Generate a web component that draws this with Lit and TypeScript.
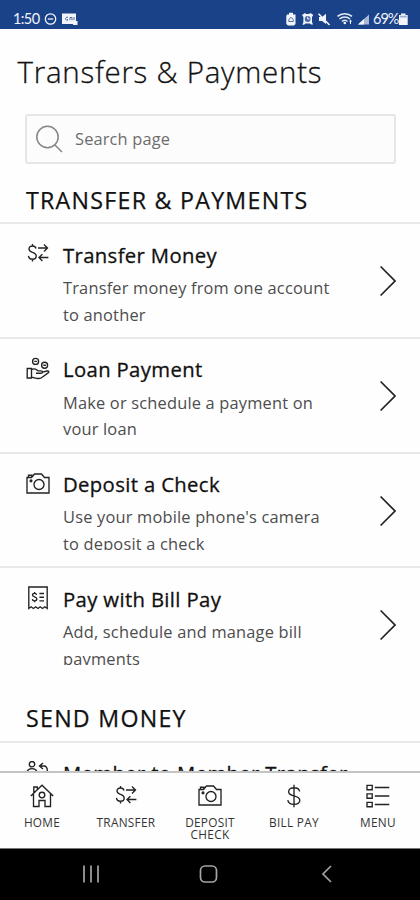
import { LitElement, html, css, svg, nothing } from "lit";
import { customElement, property } from "lit/decorators.js";

const shapes: Record<string, unknown> = {
  transfer: svg`<path d="M10 6.5C9.6 4.6 8.3 4 6.5 4C4.3 4 3 5.1 3 6.9C3 8.8 4.6 9.6 6.6 10.3C8.8 11 10.2 12 10.2 14C10.2 16 8.7 17.2 6.5 17.2C4.2 17.2 2.7 16 2.5 13.9M6.5 2V4M6.5 17.2V19.6M12 6H21.5M18 2.6L21.5 6L18 9.4M22.4 15.5H13M16.4 12.2L13 15.5L16.4 19"/>`,
  loan: svg`<circle cx="9.6" cy="4.4" r="3"/><circle cx="18.6" cy="8.2" r="3"/><path d="M8.3 4.4H10.9M17.3 8.2H19.9M1.2 11.5H5.5V21H1.2ZM5.5 12.8C8 10.8 10 12 12 13.8H15C17 13.8 17 16.2 15 16.2H10M16.5 15.2L21 14C23.2 13.7 23.4 15.4 21.8 16.2L15.5 20.7C12 22.9 9 20.7 5.5 20.2"/>`,
  camera: svg`<path d="M1 5.5H5.5L8.5 2H15.5L18.5 5.5H23V21H1Z"/><path d="M2.5 5.5V3.2H6V5"/><circle cx="13" cy="12.5" r="5"/><circle cx="5" cy="8.8" r=".9" fill="currentColor"/>`,
  receipt: svg`<path d="M2.8 1H21.2V22.5L18.8 20.8L16.5 22.5L14.2 20.8L12 22.5L9.7 20.8L7.4 22.5L5.1 20.8L2.8 22.5Z"/><path d="M10.6 8.8C10.4 7.8 9.6 7.4 8.6 7.4C7.3 7.4 6.5 8 6.5 9C6.5 11.3 10.9 10.5 10.9 13C10.9 14.1 9.9 14.8 8.6 14.8C7.3 14.8 6.4 14.2 6.3 13.1M8.6 6V7.4M8.6 14.8V16.3M13.4 7.5H18M13.4 11.2H18M13.4 14.9H18"/>`,
  member: svg`<circle cx="6" cy="3.2" r="2.7"/><path d="M.8 12.5C.8 6 11.2 6 11.2 12.5ZM13.5 5H18C20.5 5 21.5 6.5 21.5 11M17 2L13.5 5L17 8"/>`,
  home: svg`<path d="M.8 12L12 1.2L23.2 12M3.5 10V22.5H9V16.5H15V22.5H20.5V10M3.8 8.5V3H7.3V5"/><circle cx="12" cy="11" r="2.8"/>`,
  dollar: svg`<path d="M17.6 7.5C17.2 4.8 15 3.7 12 3.7C8.8 3.7 6.6 5.2 6.6 7.7C6.6 10.4 9 11.1 12 11.8C15.2 12.6 17.8 13.5 17.8 16.3C17.8 18.9 15.4 20.4 12 20.4C8.6 20.4 6.2 19.2 5.8 16.2M12 .8V23.3"/>`,
  menu: svg`<path d="M1 1.3H6.2V5.7H1ZM1 9.8H6.2V14.2H1ZM1 18.3H6.2V22.7H1ZM8.8 3.5H23.3M8.8 12H23.3M8.8 20.5H23.3"/>`,
};

@customElement("line-icon")
export class LineIcon extends LitElement {
  @property() name = "";
  static styles = css`
    :host { display: block; width: 24px; height: 24px; color: #222; }
    svg { display: block; width: 100%; height: 100%; fill: none; stroke: currentColor; stroke-width: 1.35; }
  `;
  render() {
    return html`<svg viewBox="0 0 24 24">${shapes[this.name] ?? nothing}</svg>`;
  }
}

@customElement("status-bar")
export class StatusBar extends LitElement {
  static styles = css`
    :host { display: flex; justify-content: space-between; box-sizing: border-box; height: 29px; padding: 9px 11px 0 13px; background: #1a4289; color: #f1f4fb; font: 14.5px/20px Lato, sans-serif; }
    .group { display: flex; align-items: center; height: 20px; }
    svg { display: block; height: 14px; }
    .clock { width: 31px; letter-spacing: -0.6px; }
    .percent { width: 25px; letter-spacing: -1px; }
  `;
  render() {
    return html`
      <div class="group">
        <span class="clock">1:50</span>
        <svg width="34" height="14" viewBox="0 0 34 14" fill="none" stroke="#f1f4fb">
          <circle cx="6.5" cy="7" r="5.2" stroke-width="1.3"/><path d="M3.8 7H9.2" stroke-width="1.3"/>
          <path d="M18 1.5H32V9H33.5V13H29V12H18Z" fill="#f1f4fb" stroke="none"/>
          <path d="M24 5.2C21 4.5 20.5 8.5 23.5 8.2V7M26 8.2V5.5H28V8.2M30 5V8.2" stroke="#526c9d" stroke-width="1"/>
        </svg>
      </div>
      <div class="group">
        <svg width="88" height="14" viewBox="0 0 88 14" fill="#f1f4fb">
          <path d="M2 2.5H4V.8H8V2.5H10.5V12L9 13.4H3L1.3 12V4Z"/>
          <path d="M3.8 9.5V7.4L6 5.4L8.3 7.4V9.5Z" fill="none" stroke="#54709f" stroke-width="1"/>
          <path d="M17 3L20 1L21 2H24L25.5 1L28.3 3L27 5V10L28 12.5H26L25 11.5H20.5L19 12.8H17.5L18.4 10V5Z"/>
          <circle cx="22.7" cy="7" r="2.9" fill="#4a69a3"/><path d="M22.7 4.8V7H24.5" fill="none" stroke="#f1f4fb" stroke-width="1"/>
          <path d="M34 5H37L41 1.8V12L37 9H34Z"/><path d="M33.5 1.8L44.5 13" stroke="#f1f4fb" stroke-width="1.6"/>
          <path d="M52.5 4.4C56.5 .8 63 .8 67 4.4M54.5 7C57.5 4.2 62 4.2 65 7M57 9.5C59 7.8 60.8 7.8 62.5 9.5" fill="none" stroke="#e5eaf5" stroke-width="1.5"/>
          <circle cx="59.8" cy="11" r="1.3"/><path d="M65.5 7.5L67 9.5H66V12H65V9.5H64Z"/>
          <path d="M73 12.5L84 2.5V12.5Z" fill="#a8b8d5"/><path d="M73 12.5L79 7V12.5Z"/>
        </svg>
        <span class="percent">69%</span>
        <svg width="11" height="14" viewBox="0 0 11 14" fill="#f1f4fb"><path d="M3 1.5H7.5V3H9.7V13H1V3H3Z"/><path d="M2 3.7H8.8V5.5H2Z" fill="#9bacd0"/></svg>
      </div>`;
  }
}

@customElement("action-row")
export class ActionRow extends LitElement {
  @property() icon = "";
  @property() heading = "";
  @property({ attribute: false }) lines: string[] = [];
  static styles = css`
    :host { display: grid; grid-template-columns: 37px 1fr 16px; box-sizing: border-box; height: 114.7px; padding: 0 24px 0 26px; border-top: 2px solid #e8e8e8; }
    line-icon { margin-top: 18px; }
    .title { margin: 16.2px 0 0; font-size: 20.3px; line-height: 28px; font-weight: 400; -webkit-text-stroke: 0.3px #111; letter-spacing: 0.36px; color: #111; white-space: nowrap; }
    .text { margin: 6.5px 0 0; height: 45.5px; overflow: hidden; font-size: 16.4px; line-height: 26.7px; color: #4d4d4d; letter-spacing: 0.19px; white-space: nowrap; }
    .chevron { display: block; margin-top: 41px; width: 16px; height: 32px; fill: none; stroke: #222; stroke-width: 1.7; }
  `;
  render() {
    return html`
      <line-icon name=${this.icon}></line-icon>
      <div>
        <h3 class="title">${this.heading}</h3>
        <p class="text">${this.lines.map((l, i) => html`${i ? html`<br>` : nothing}${l}`)}</p>
      </div>
      <svg class="chevron" viewBox="0 0 16 32"><path d="M.6 1.5L15 16L.6 30.5"/></svg>`;
  }
}

const actions = [
  { icon: "transfer", heading: "Transfer Money", lines: ["Transfer money from one account", "to another"] },
  { icon: "loan", heading: "Loan Payment", lines: ["Make or schedule a payment on", "your loan"] },
  { icon: "camera", heading: "Deposit a Check", lines: ["Use your mobile phone's camera", "to deposit a check"] },
  { icon: "receipt", heading: "Pay with Bill Pay", lines: ["Add, schedule and manage bill", "payments"] },
];

const tabs = [
  { icon: "home", label: ["HOME"] },
  { icon: "transfer", label: ["TRANSFER"] },
  { icon: "camera", label: ["DEPOSIT", "CHECK"] },
  { icon: "dollar", label: ["BILL PAY"] },
  { icon: "menu", label: ["MENU"] },
];

@customElement("app-root")
export class AppRoot extends LitElement {
  static styles = css`
    :host { display: flex; flex-direction: column; width: 420px; height: 900px; overflow: hidden; background: #fefefe; font-family: "Open Sans", "Noto Sans", sans-serif; color: #111; }
    .page { flex: 1; min-height: 0; overflow: hidden; }
    .heading { margin: 23px 0 0 17.5px; font-size: 29.5px; line-height: 40px; font-weight: 300; -webkit-text-stroke: 0.3px #111; letter-spacing: 0.73px; white-space: nowrap; }
    .search { display: flex; align-items: center; box-sizing: border-box; margin: 22px 24px 0 25px; height: 50px; padding-left: 9px; gap: 12px; border: 2px solid #e6e6e6; border-radius: 3px; background: #fcfcfc; color: #6d6d6d; font-size: 16.4px; letter-spacing: 0.15px; }
    .search span { margin-bottom: 2px; }
    .search svg { width: 27px; height: 28px; fill: none; stroke: #858585; stroke-width: 1.5; }
    .section { margin: 0; box-sizing: border-box; height: 58.4px; padding: 19px 0 0 26px; font-size: 23.2px; line-height: 34px; font-weight: 400; -webkit-text-stroke: 0.25px #111; letter-spacing: 1.27px; white-space: nowrap; }
    .section.next { height: 59.5px; padding-top: 19.5px; }
    .tabs { display: grid; box-sizing: border-box; grid-template-columns: repeat(5, 84px); height: 77px; border-top: 2px solid #c4c4c4; background: #fefefe; }
    .tab { display: flex; flex-direction: column; align-items: center; padding-top: 11px; font-size: 11.8px; line-height: 12px; letter-spacing: 0.3px; color: #333; text-align: center; white-space: nowrap; }
    .tab span { margin-top: 8px; }
    .system { height: 52px; background: #000; border-top: 1px solid #777; box-sizing: border-box; }
    .system svg { display: block; fill: none; stroke: #a5a5a5; stroke-width: 1.7; }
  `;
  render() {
    return html`
      <status-bar></status-bar>
      <main class="page">
        <h1 class="heading">Transfers &amp; Payments</h1>
        <div class="search">
          <svg viewBox="0 0 27 28"><circle cx="11.5" cy="12" r="10.7"/><path d="M18.5 19.5L26 27"/></svg>
          <span>Search page</span>
        </div>
        <h2 class="section">TRANSFER &amp; PAYMENTS</h2>
        ${actions.map((a) => html`<action-row .icon=${a.icon} .heading=${a.heading} .lines=${a.lines}></action-row>`)}
        <h2 class="section next">SEND MONEY</h2>
        <action-row .icon=${"member"} .heading=${"Member to Member Transfer"}></action-row>
      </main>
      <nav class="tabs">
        ${tabs.map((t) => html`<div class="tab"><line-icon .name=${t.icon}></line-icon><span>${t.label.map((l, i) => html`${i ? html`<br>` : nothing}${l}`)}</span></div>`)}
      </nav>
      <div class="system">
        <svg width="420" height="51" viewBox="0 0 420 51"><path d="M84 16.5V33.5M91 16.5V33.5M98 16.5V33.5M331 17L323 25L331 33"/><rect x="200.5" y="17" width="16" height="16" rx="4.5"/></svg>
      </div>`;
  }
}
